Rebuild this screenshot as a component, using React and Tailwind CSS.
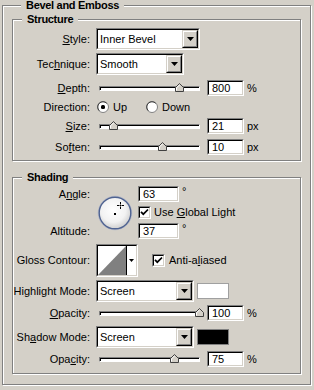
const etched = 'border border-[#808080] shadow-[inset_1px_1px_0_#fff,1px_1px_0_#fff]';
const sunkenOuter = 'border border-t-[#808080] border-l-[#808080] border-b-white border-r-white';
const sunkenInner = 'border border-t-black border-l-black border-b-[#d4d0c8] border-r-[#d4d0c8]';

function U({ children }) {
  return <span className="underline decoration-1 underline-offset-[1px]">{children}</span>;
}

function Legend({ children }) {
  return (
    <legend className="ml-[9px] px-[5px] bg-[#d4d0c8] font-bold text-[11px] leading-[11px] tracking-[-0.3px]">
      {children}
    </legend>
  );
}

function Row({ label, h = 'h-[16px]', mt = '', children }) {
  return (
    <div className={`flex items-center ${h} ${mt}`}>
      <div className="w-[77px] shrink-0 text-right whitespace-nowrap">{label}</div>
      <div className="ml-[6px] flex items-center h-full">{children}</div>
    </div>
  );
}

function Arrow() {
  return (
    <svg width="7" height="4" viewBox="0 0 7 4">
      <path d="M0 0h7L3.5 4z" fill="#000" />
    </svg>
  );
}

function Select({ value, w }) {
  return (
    <div className={`${w} h-[22px] ${sunkenOuter}`}>
      <div className={`flex h-full bg-white ${sunkenInner}`}>
        <div className="flex-1 flex items-center pl-[2px] whitespace-nowrap overflow-hidden">{value}</div>
        <div className="w-[16px] h-full border border-t-[#d4d0c8] border-l-[#d4d0c8] border-b-black border-r-black">
          <div className="w-full h-full flex items-center justify-center bg-[#d4d0c8] border border-t-white border-l-white border-b-[#808080] border-r-[#808080]">
            <Arrow />
          </div>
        </div>
      </div>
    </div>
  );
}

function Field({ value, w = 'w-[37px]' }) {
  return (
    <div className={`${w} h-[16px] ${sunkenOuter}`}>
      <div className={`h-full bg-white pl-[3px] leading-[12px] ${sunkenInner}`}>{value}</div>
    </div>
  );
}

function Thumb() {
  return (
    <svg width="9" height="9" viewBox="0 0 9 9">
      <path d="M0.5 8.5V4.5L4.5 0.5L8.5 4.5V8.5Z" fill="#d4d0c8" stroke="#404040" />
      <path d="M1.5 7.5V4.9L4.5 1.9" fill="none" stroke="#fff" />
    </svg>
  );
}

function Slider({ pos }) {
  return (
    <div className={`relative ml-[3px] w-[101px] h-[5px] ${sunkenOuter}`}>
      <div className="h-full bg-white border-t border-l border-black" />
      <div className="absolute bottom-[-2px] flex" style={{ left: pos - 5 }}>
        <Thumb />
      </div>
    </div>
  );
}

function SliderRow({ label, pos, value, unit, mt }) {
  return (
    <Row label={label} mt={mt}>
      <Slider pos={pos} />
      <div className="ml-[7px]">
        <Field value={value} />
      </div>
      <span className="ml-[3px]">{unit}</span>
    </Row>
  );
}

function Radio({ checked }) {
  return (
    <svg width="12" height="12" viewBox="0 0 12 12">
      <circle cx="6" cy="6" r="5.5" fill="#fff" stroke="#808080" />
      <path d="M2.3 9.7A5 5 0 0 1 9.7 2.3" fill="none" stroke="#404040" />
      {checked && <rect x="4" y="4" width="4" height="4" rx="1.5" fill="#000" />}
    </svg>
  );
}

function Check() {
  return (
    <div className={`w-[13px] h-[13px] ${sunkenOuter}`}>
      <div className={`w-full h-full bg-white ${sunkenInner}`}>
        <svg width="9" height="9" viewBox="0 0 9 9">
          <path d="M1 3.8L3.3 6.2L8 1.5" fill="none" stroke="#000" strokeWidth="1.7" />
        </svg>
      </div>
    </div>
  );
}

function Dial() {
  return (
    <svg width="36" height="36" viewBox="0 0 36 36">
      <defs>
        <radialGradient id="dialFill" cx="45%" cy="40%" r="60%">
          <stop offset="0" stopColor="#ffffff" />
          <stop offset="0.65" stopColor="#f2f2f2" />
          <stop offset="1" stopColor="#d0d0d0" />
        </radialGradient>
      </defs>
      <circle cx="18" cy="18" r="16.8" fill="none" stroke="#b8bccb" strokeWidth="1" />
      <circle cx="18" cy="18" r="15.8" fill="url(#dialFill)" stroke="#4f6391" strokeWidth="1.4" />
      <rect x="17" y="18" width="2" height="2" fill="#000" />
      <path d="M23.5 7v2.5M23.5 11.5V14M20 10.5h2.5M24.5 10.5H27" stroke="#000" strokeWidth="1" />
      <rect x="23" y="10" width="1" height="1" fill="#000" />
    </svg>
  );
}

function Contour() {
  return (
    <div className={`w-[42px] h-[33px] ${sunkenOuter}`}>
      <div className={`flex w-full h-full ${sunkenInner}`}>
        <svg width="28" height="29" viewBox="0 0 28 29" className="shrink-0">
          <rect width="28" height="29" fill="#fff" />
          <path d="M0 29L28 0V29Z" fill="#808080" />
        </svg>
        <div className="flex-1 flex items-center justify-center bg-white border-l border-black">
          <svg width="5" height="3" viewBox="0 0 5 3">
            <path d="M0 0h5L2.5 3z" fill="#000" />
          </svg>
        </div>
      </div>
    </div>
  );
}

export default function App() {
  return (
    <div className="w-[314px] h-[390px] overflow-hidden bg-[#d4d0c8] text-black text-[11px] leading-[13px] font-['Liberation_Sans',Arial,sans-serif]">
      <fieldset className={`ml-[2px] w-[309px] px-[9px] pb-[10px] ${etched}`}>
        <Legend>Bevel and Emboss</Legend>

        <fieldset className={`mt-[3px] w-full pb-[5px] ${etched}`}>
          <Legend>Structure</Legend>
          <Row label={<><U>S</U>tyle:</>} h="h-[22px]" mt="mt-[3px]">
            <Select value="Inner Bevel" w="w-[104px]" />
          </Row>
          <Row label={<>Tec<U>h</U>nique:</>} h="h-[22px]" mt="mt-[3px]">
            <Select value="Smooth" w="w-[88px]" />
          </Row>
          <SliderRow label={<><U>D</U>epth:</>} pos={80} value="800" unit="%" mt="mt-[5px]" />
          <Row label="Direction:" mt="mt-[3px]">
            <div className="ml-[1px] flex items-center gap-[4px]">
              <Radio checked />
              <span>Up</span>
            </div>
            <div className="ml-[19px] flex items-center gap-[4px]">
              <Radio />
              <span>Down</span>
            </div>
          </Row>
          <SliderRow label={<><U>S</U>ize:</>} pos={14} value="21" unit="px" mt="mt-[3px]" />
          <SliderRow label={<>So<U>f</U>ten:</>} pos={63} value="10" unit="px" mt="mt-[5px]" />
        </fieldset>

        <fieldset className={`mt-[11px] w-full pt-[3px] pb-[6px] ${etched}`}>
          <Legend>Shading</Legend>
          <div className="grid grid-cols-[83px_42px_1fr] grid-rows-[16px_13px_16px] gap-y-[4px]">
            <div className="col-start-1 row-start-1 pr-[6px] text-right self-center">
              A<U>n</U>gle:
            </div>
            <div className="col-start-2 row-start-1 row-span-3 self-center ml-[1px] flex">
              <Dial />
            </div>
            <div className="col-start-3 row-start-1 flex items-center">
              <Field value="63" w="w-[41px]" />
              <span className="ml-[3px] self-start leading-[10px]">°</span>
            </div>
            <div className="col-start-3 row-start-2 flex items-center">
              <Check />
              <span className="ml-[3px]">Use <U>G</U>lobal Light</span>
            </div>
            <div className="col-start-1 row-start-3 pr-[6px] text-right self-center">Altitude:</div>
            <div className="col-start-3 row-start-3 flex items-center">
              <Field value="37" w="w-[41px]" />
              <span className="ml-[3px] self-start leading-[10px]">°</span>
            </div>
          </div>

          <Row label="Gloss Contour:" h="h-[33px]" mt="mt-[5px]">
            <Contour />
            <div className="ml-[14px] flex items-center">
              <Check />
              <span className="ml-[4px]">Anti-a<U>l</U>iased</span>
            </div>
          </Row>

          <Row label={<>Hi<U>g</U>hlight Mode:</>} h="h-[22px]" mt="mt-[3px]">
            <Select value="Screen" w="w-[98px]" />
            <div className="ml-[3px] w-[32px] h-[16px] bg-white border border-[#a0a0a0]" />
          </Row>
          <SliderRow label={<><U>O</U>pacity:</>} pos={100} value="100" unit="%" mt="mt-[3px]" />

          <Row label={<>Sh<U>a</U>dow Mode:</>} h="h-[22px]" mt="mt-[5px]">
            <Select value="Screen" w="w-[98px]" />
            <div className="ml-[3px] w-[32px] h-[16px] bg-black border border-[#808080]" />
          </Row>
          <SliderRow label={<>Opa<U>c</U>ity:</>} pos={75} value="75" unit="%" mt="mt-[3px]" />
        </fieldset>
      </fieldset>
    </div>
  );
}
